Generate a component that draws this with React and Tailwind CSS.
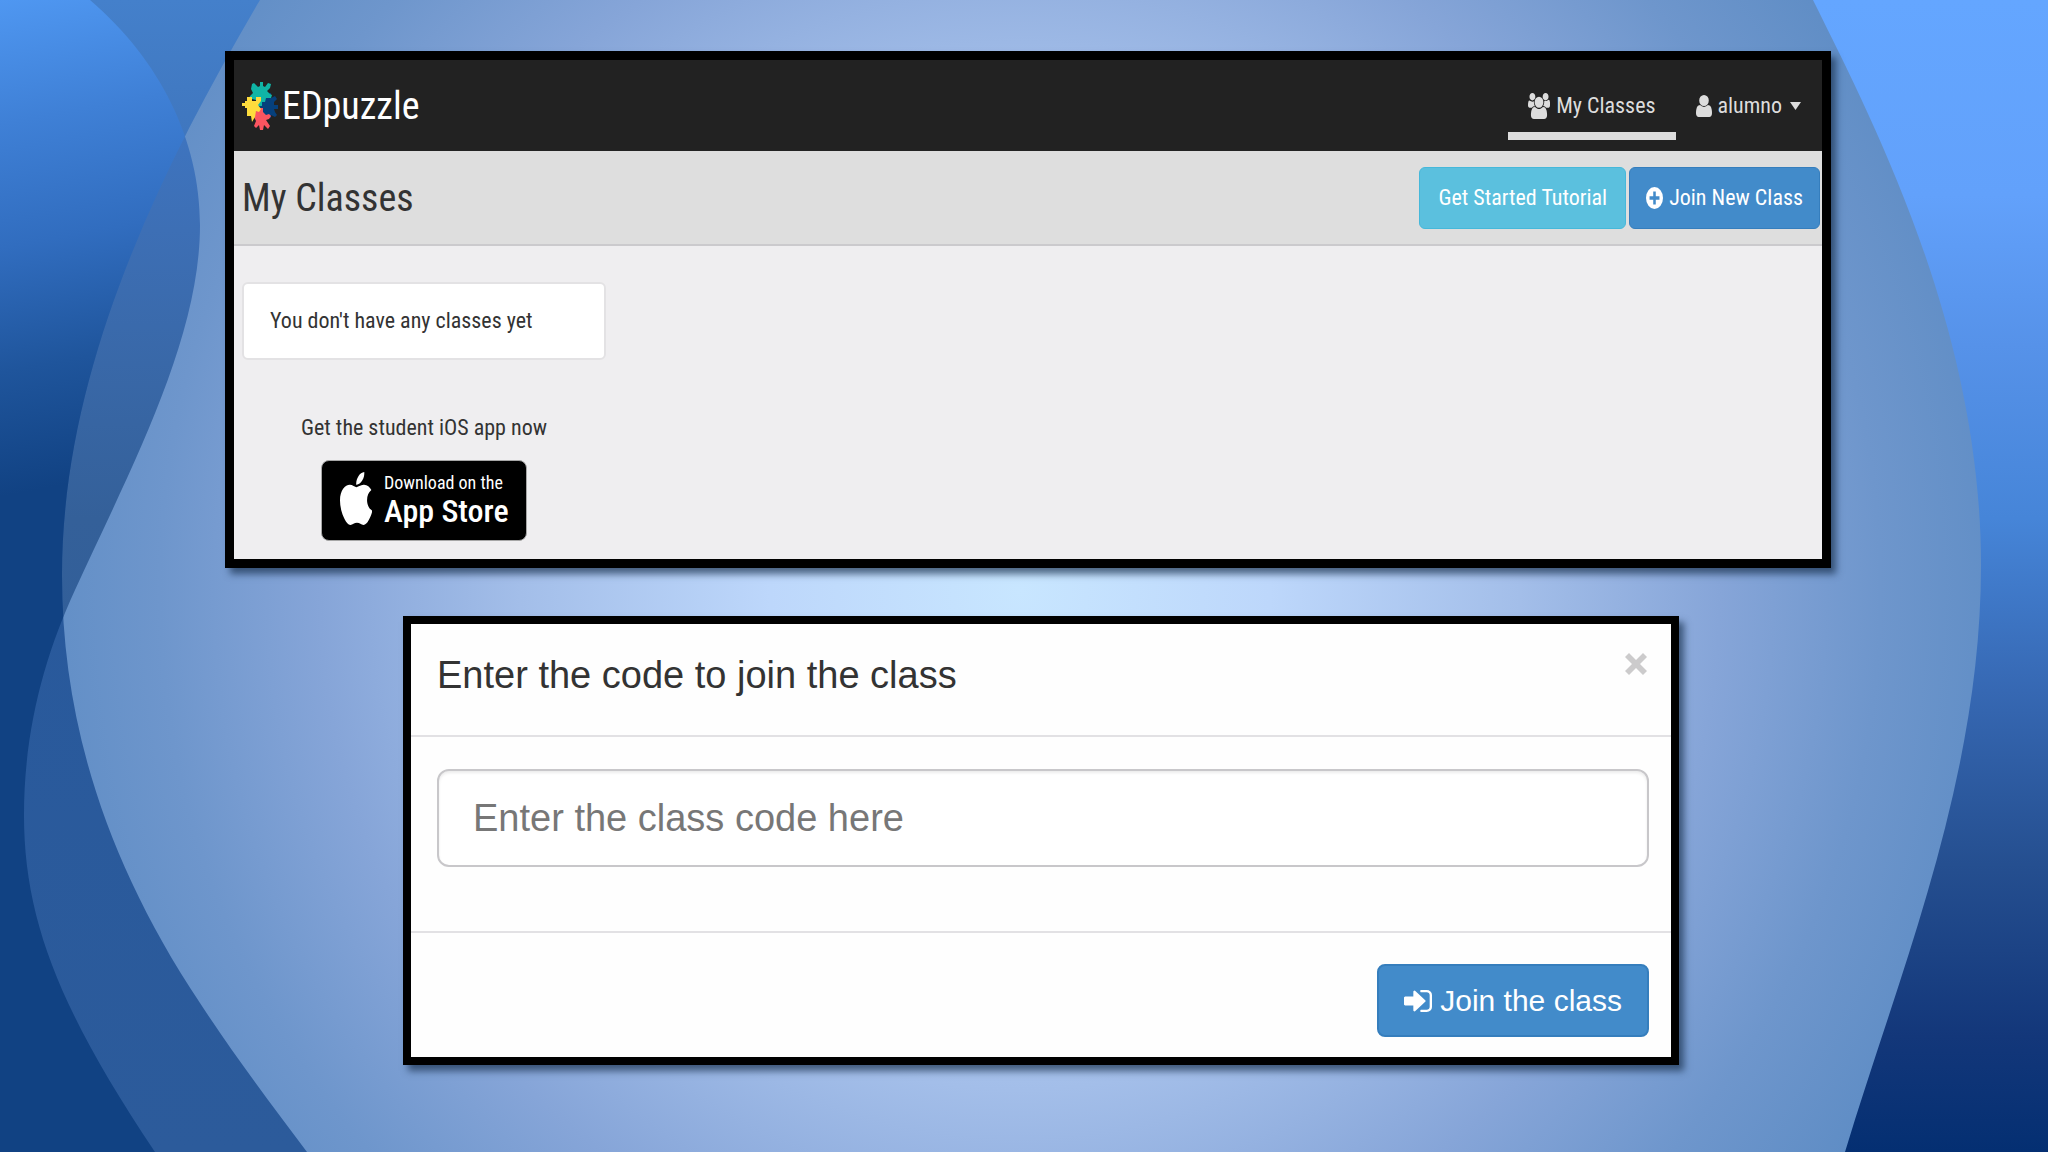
import { useState } from 'react'
import { FaApple } from 'react-icons/fa'

const iconPaths = {
  users: {
    box: '0 0 1920 1792',
    d: 'M593 896q-162 5-265 128h-134q-82 0-138-40.5t-56-118.5q0-353 124-353 6 0 43.5 21t97.5 42.5 119 21.5q67 0 133-23-5 37-5 66 0 159 93 298zm1071 637q0 120-73 189.5t-194 69.5h-874q-121 0-194-69.5t-73-189.5q0-53 3.5-103.5t14-109 26.5-108.5 43-97.5 62-81 85.5-53.5 111.5-20q10 0 43 21.5t73 48 107 48 135 21.5 135-21.5 107-48 73-48 43-21.5q61 0 111.5 20t85.5 53.5 62 81 43 97.5 26.5 108.5 14 109 3.5 103.5zm-1024-1277q0 106-75 181t-181 75-181-75-75-181 75-181 181-75 181 75 75 181zm704 384q0 159-112.5 271.5t-271.5 112.5-271.5-112.5-112.5-271.5 112.5-271.5 271.5-112.5 271.5 112.5 112.5 271.5zm576 225q0 78-56 118.5t-138 40.5h-134q-103-123-265-128 93-139 93-298 0-29-5-66 66 23 133 23 59 0 119-21.5t97.5-42.5 43.5-21q124 0 124 353zm-128-609q0 106-75 181t-181 75-181-75-75-181 75-181 181-75 181 75 75 181z',
  },
  user: {
    box: '213 128 1280 1536',
    d: 'M1493 1399q0 109-62.5 187t-150.5 78h-854q-88 0-150.5-78t-62.5-187q0-85 8.5-160.5t31.5-152 58.5-131 94-89 134.5-34.5q131 128 313 128t313-128q76 0 134.5 34.5t94 89 58.5 131 31.5 152 8.5 160.5zm-256-887q0 159-112.5 271.5t-271.5 112.5-271.5-112.5-112.5-271.5 112.5-271.5 271.5-112.5 271.5 112.5 112.5 271.5z',
  },
  plus: {
    box: '0 0 24 24',
    d: 'M12 0a12 12 0 1 0 0 24a12 12 0 1 0 0-24zM10.2 5h3.6v5.2H19v3.6h-5.2V19h-3.6v-5.2H5v-3.6h5.2z',
  },
  signIn: {
    box: '0 256 1536 1280',
    d: 'M1184 896q0 26-19 45l-544 544q-19 19-45 19t-45-19-19-45v-288h-448q-26 0-45-19t-19-45v-384q0-26 19-45t45-19h448v-288q0-26 19-45t45-19 45 19l544 544q19 19 19 45zm352-352v704q0 119-84.5 203.5t-203.5 84.5h-320q-13 0-22.5-9.5t-9.5-22.5q0-4-1-20t-.5-26.5 3-23.5 10-19.5 20.5-6.5h320q66 0 113-47t47-113v-704q0-66-47-113t-113-47h-312l-11.5-1-11.5-3-8-5.5-7-9-2-13.5q0-4-1-20t-.5-26.5 3-23.5 10-19.5 20.5-6.5h320q119 0 203.5 84.5t84.5 203.5z',
  },
  times: {
    box: '0 0 22 22',
    d: 'M4 0L11 7L18 0L22 4L15 11L22 18L18 22L11 15L4 22L0 18L7 11L0 4z',
  },
}

function Icon({ name, className }) {
  const { box, d } = iconPaths[name]
  return (
    <svg viewBox={box} preserveAspectRatio="none" fill="currentColor" fillRule="evenodd" className={className} aria-hidden="true">
      <path d={d} />
    </svg>
  )
}

function PuzzleLogo() {
  return (
    <svg viewBox="0 0 36 50" className="w-9 h-[50px]" aria-hidden="true">
      <path fill="#06407c" d="M22 16h4v-4h3v5l4-2 2 3-3 3v3h4v4h-4l1 3 2 3-2 2-4-2v3h-3l-3 3-5-1-3-5 2-9z" />
      <path fill="#10b5a6" d="M10 3l2-1 4 4 2-1V1h3v4l2 1 3-4 3 1-1 4-3 3 3 3 2 1-1 3h-5l-1 4h-3v4h-4l-2-6-4-1h-3l1-3 3-3-2-4z" />
      <path fill="#fc5560" d="M14 30l3-3h4v4l3 3 3-1 2 2-2 3-3 1 4 6-2 3-4-4-1 5h-3l-1-5-3 3-2-2 2-5-2-4-3-2z" />
      <path fill="#fedc3d" d="M5 16h5v4h4v-4h5v4l-3 4 3 4-2 3-3-1-1 6-3 5-1-6H5v-8H3v-2H0v-3h3v-2h2z" />
    </svg>
  )
}

function Backdrop() {
  const waveA = 'M0 0H260C160 170 62 370 62 575C62 720 105 860 200 1003C232 1052 270 1103 307 1152H0Z'
  const waveB = 'M0 0H90C160 60 200 140 200 225C200 340 130 470 75 590C45 655 24 730 24 815C24 920 60 1010 155 1152H0Z'
  return (
    <svg viewBox="0 0 2048 1152" preserveAspectRatio="none" className="absolute inset-0 -z-10 w-full h-full" aria-hidden="true">
      <defs>
        <radialGradient id="glow" gradientUnits="userSpaceOnUse" cx="0" cy="0" r="1" gradientTransform="translate(1020 590) scale(1000 1000)">
          <stop offset="0" stopColor="#c8e6ff" />
          <stop offset="0.25" stopColor="#bdd7fb" />
          <stop offset="0.5" stopColor="#a3bee9" />
          <stop offset="0.7" stopColor="#86a5d8" />
          <stop offset="0.86" stopColor="#6e96cc" />
          <stop offset="1" stopColor="#5f8dc5" />
        </radialGradient>
        <linearGradient id="waveA" x1="0" y1="0" x2="0" y2="1">
          <stop offset="0" stopColor="#4480cb" />
          <stop offset="0.2" stopColor="#3c70b6" />
          <stop offset="0.42" stopColor="#28599c" />
          <stop offset="1" stopColor="#2c5b9b" />
        </linearGradient>
        <linearGradient id="waveB" x1="0" y1="0" x2="0" y2="1">
          <stop offset="0" stopColor="#3f7bcd" />
          <stop offset="0.2" stopColor="#3d6fb5" />
          <stop offset="0.45" stopColor="#346099" />
          <stop offset="1" stopColor="#285a9c" />
        </linearGradient>
        <linearGradient id="overlap" gradientUnits="userSpaceOnUse" x1="0" y1="0" x2="90" y2="480">
          <stop offset="0" stopColor="#4f97f1" />
          <stop offset="0.25" stopColor="#3f80d6" />
          <stop offset="0.5" stopColor="#316dbf" />
          <stop offset="0.75" stopColor="#1f559c" />
          <stop offset="1" stopColor="#114283" />
        </linearGradient>
        <linearGradient id="right" x1="0" y1="0" x2="0" y2="1">
          <stop offset="0" stopColor="#64a6ff" />
          <stop offset="0.17" stopColor="#62a1fb" />
          <stop offset="0.3" stopColor="#5692e9" />
          <stop offset="0.45" stopColor="#4685d8" />
          <stop offset="0.6" stopColor="#3668b3" />
          <stop offset="0.75" stopColor="#254f90" />
          <stop offset="0.9" stopColor="#13377a" />
          <stop offset="1" stopColor="#042f72" />
        </linearGradient>
        <clipPath id="clipA"><path d={waveA} /></clipPath>
      </defs>
      <rect width="2048" height="1152" fill="url(#glow)" />
      <path d={waveB} fill="url(#waveB)" />
      <path d={waveA} fill="url(#waveA)" />
      <path d={waveB} fill="url(#overlap)" clipPath="url(#clipA)" />
      <path d="M1813 0C1875 125 1981 330 1981 565C1981 780 1900 970 1845 1152H2048V0Z" fill="url(#right)" />
    </svg>
  )
}

function ClassesPage() {
  return (
    <section className="border-9 border-black bg-[#efeef0] shadow-[5px_6px_7px_rgba(25,50,80,0.7)] font-['Roboto_Condensed','Liberation_Sans',sans-serif] text-[#333]">
      <header className="flex items-center justify-between h-[91px] bg-[#222] pl-2 pr-[21px]">
        <a href="#home" className="flex items-center gap-1 text-white text-[38px] leading-none">
          <PuzzleLogo />
          EDpuzzle
        </a>
        <nav className="flex self-stretch items-start pt-[22px] gap-5 text-[22px] leading-[48px] text-[#ddd]">
          <a href="#classes" className="flex items-center gap-1.5 px-5 pb-0.5 border-b-8 border-[#ddd]">
            <Icon name="users" className="w-[22px] h-[26px]" />
            My Classes
          </a>
          <button type="button" className="flex items-center gap-1.5">
            <Icon name="user" className="w-4 h-[22px]" />
            alumno
            <svg viewBox="0 0 10 8" preserveAspectRatio="none" className="w-[11px] h-2 ml-0.5" fill="currentColor" aria-hidden="true"><path d="M0 0h10l-5 8z" /></svg>
          </button>
        </nav>
      </header>

      <div className="flex items-center justify-between h-[95px] bg-[#dedede] border-b-2 border-[#cbcacd] pl-2 pr-0.5">
        <h1 className="text-[38px] leading-none">My Classes</h1>
        <div className="flex gap-[3px] text-[22px] text-white">
          <button type="button" className="h-[62px] px-[18px] rounded-md bg-[#5bc0de] border border-[#46b8da]">Get Started Tutorial</button>
          <button type="button" className="flex items-center gap-1.5 h-[62px] px-4 rounded-md bg-[#428bca] border border-[#357ebd]">
            <Icon name="plus" className="w-[17px] h-[22px]" />
            Join New Class
          </button>
        </div>
      </div>

      <div className="flex flex-col items-start pl-2 pt-9 pb-[18px] text-[22px]">
        <p className="w-[364px] py-5 px-[26px] leading-[34px] bg-white rounded-md border-2 border-[#e3e2e4]">You don't have any classes yet</p>
        <div className="flex flex-col items-center w-[364px] mt-[52px]">
          <p className="leading-8">Get the student iOS app now</p>
          <a href="#app-store" className="flex items-center gap-3 w-[206px] h-[81px] mt-4 pl-[18px] rounded-lg bg-black border border-[#a6a6a6] text-white">
            <FaApple preserveAspectRatio="none" viewBox="4 32 372 448" className="w-8 h-[53px] mb-1" />
            <span className="flex flex-col">
              <span className="text-[18px] leading-5">Download on the</span>
              <span className="text-[32px] leading-9 font-medium">App Store</span>
            </span>
          </a>
        </div>
      </div>
    </section>
  )
}

function JoinDialog() {
  const [code, setCode] = useState('')

  return (
    <section className="ml-[178px] mr-[152px] border-8 border-black bg-[#fefefe] shadow-[5px_6px_7px_rgba(25,50,80,0.7)] font-['Liberation_Sans',Arial,sans-serif]">
      <header className="flex items-start justify-between h-[113px] border-b-2 border-[#e2e1e4] pl-[26px] pr-6 pt-[29px]">
        <h2 className="text-[38px] leading-[44px] text-[#333]">Enter the code to join the class</h2>
        <button type="button" aria-label="Close" className="text-[#cccbcc]">
          <Icon name="times" className="w-[22px] h-[22px]" />
        </button>
      </header>

      <div className="pt-8 pb-16 pl-[26px] pr-[22px]">
        <input
          value={code}
          onChange={e => setCode(e.target.value)}
          placeholder="Enter the class code here"
          aria-label="Class code"
          className="block w-full h-[98px] px-[34px] rounded-xl border-2 border-[#c8c7ca] bg-white text-[38px] text-[#555] placeholder:text-[#777] shadow-[inset_0_2px_3px_rgba(0,0,0,0.08)]"
        />
      </div>

      <footer className="flex justify-end border-t-2 border-[#e2e1e4] pt-[31px] pb-5 pr-[22px]">
        <button type="button" className="flex items-center gap-2 h-[73px] px-[25px] rounded-lg bg-[#428bca] border-2 border-[#357ebd] text-[30px] text-white">
          <Icon name="signIn" className="w-7 h-[22px]" />
          Join the class
        </button>
      </footer>
    </section>
  )
}

export default function App() {
  return (
    <main className="relative isolate min-h-screen overflow-hidden flex flex-col gap-12 pt-[51px] pb-[84px] pl-[225px] pr-[217px]">
      <Backdrop />
      <ClassesPage />
      <JoinDialog />
    </main>
  )
}
